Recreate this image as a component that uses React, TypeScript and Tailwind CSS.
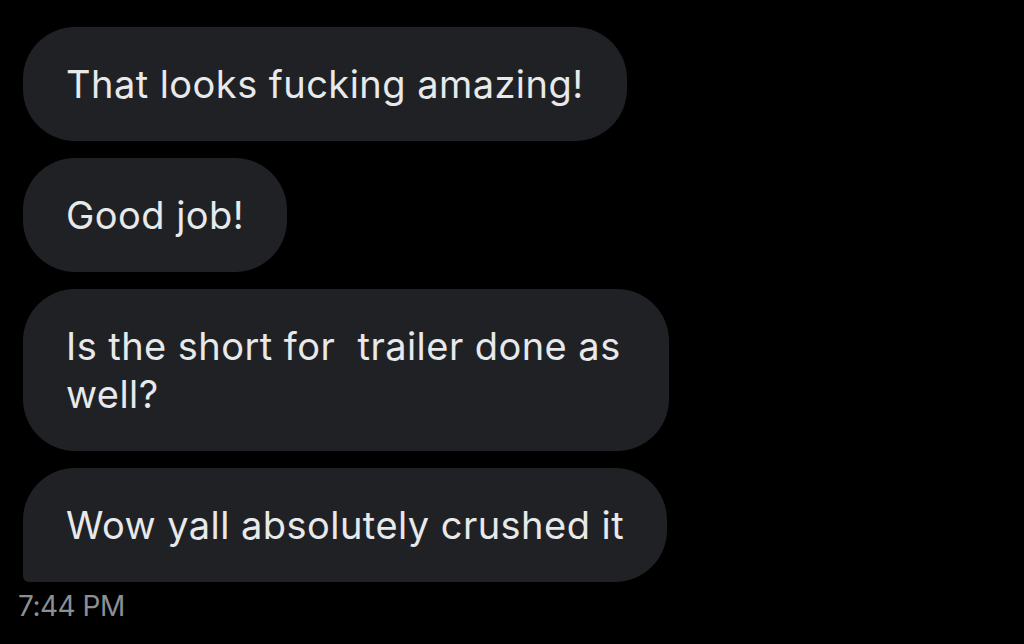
const messages = [
  "That looks fucking amazing!",
  "Good job!",
  "Is the short for\u00a0 trailer done as well?",
  "Wow yall absolutely crushed it",
];

function Bubble({ text, last }: { text: string; last: boolean }) {
  return (
    <div
      className={
        last
          ? "w-fit max-w-[646px] rounded-[52px] rounded-bl-[6px] bg-[#202125] px-[43px] py-[33px] text-[38px] leading-[48px] tracking-[0.45px] text-[#e7e9ea]"
          : "w-fit max-w-[646px] rounded-[52px] bg-[#202125] px-[43px] py-[33px] text-[38px] leading-[48px] tracking-[0.45px] text-[#e7e9ea]"
      }
    >
      {text}
    </div>
  );
}

export default function App() {
  return (
    <div className="h-[644px] w-[1024px] overflow-hidden bg-black font-['Inter','Noto_Sans',sans-serif] antialiased">
      <div className="flex flex-col gap-[17px] pl-[23px] pt-[27px]">
        {messages.map((m, i) => (
          <Bubble key={i} text={m} last={i === messages.length - 1} />
        ))}
      </div>
      <div className="mt-[7px] pl-[18px] text-[28px] leading-[34px] tracking-[-0.5px] text-[#8b8f94]">
        7:44 PM
      </div>
    </div>
  );
}
